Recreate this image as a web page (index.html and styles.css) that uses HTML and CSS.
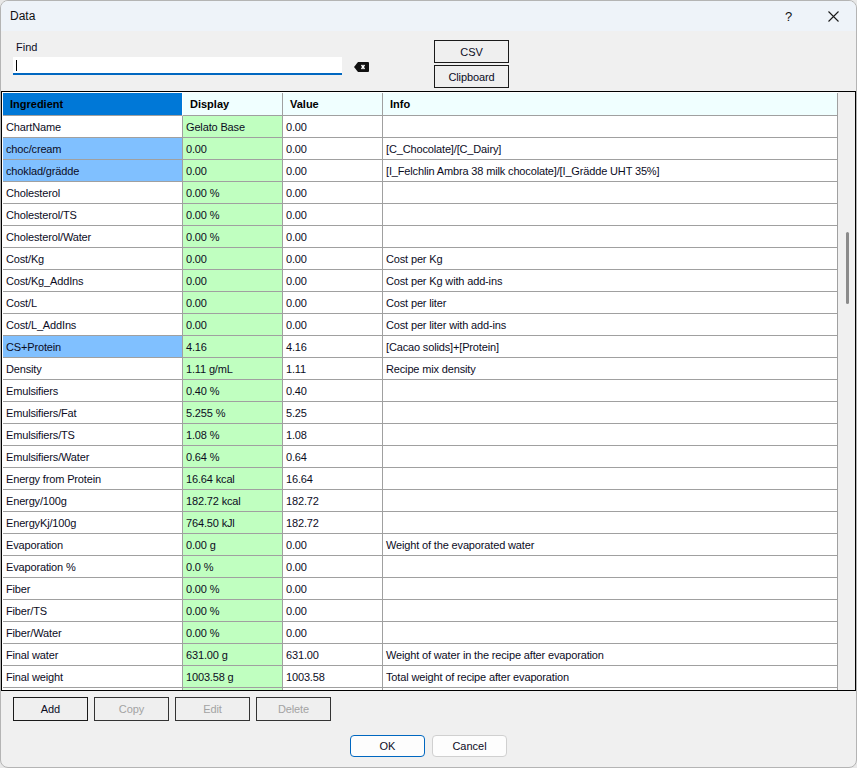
FILE: index.html
```html
<!DOCTYPE html>
<html lang="en">
<head>
    <meta charset="UTF-8">
    <title>Data</title>
    <link rel="stylesheet" href="styles.css">
</head>
<body>
    <div class="window">
        <div class="titlebar">
            <span class="title">Data</span>
            <span class="help">?</span>
            <span class="close">
                <svg width="11" height="11" viewBox="0 0 11 11"><path d="M0.5 0.5 L10.5 10.5 M10.5 0.5 L0.5 10.5" stroke="#1a1a1a" stroke-width="1.1" fill="none"/></svg>
            </span>
        </div>

        <div class="toolbar">
            <div class="find-group">
                <label class="find-label" for="find">Find</label>
                <div class="find-input" id="find"><span class="caret"></span></div>
            </div>
            <span class="clear-btn">
                <svg width="15" height="10" viewBox="0 0 15 10">
                    <path d="M4 0 H14 Q15 0 15 1 V9 Q15 10 14 10 H4 L0 5 Z" fill="#111"/>
                    <path d="M7.5 3 L10.5 7 M10.5 3 L7.5 7" stroke="#fff" stroke-width="1.4"/>
                </svg>
            </span>
            <div class="export-buttons">
                <button class="btn">CSV</button>
                <button class="btn">Clipboard</button>
            </div>
        </div>

        <div class="grid">
            <div class="grid-body">
                <div class="row header">
                    <div class="cell selected">Ingredient</div>
                    <div class="cell">Display</div>
                    <div class="cell">Value</div>
                    <div class="cell">Info</div>
                </div>
                <div class="row"><div class="cell">ChartName</div><div class="cell display">Gelato Base</div><div class="cell">0.00</div><div class="cell"></div></div>
                <div class="row"><div class="cell hl">choc/cream</div><div class="cell display">0.00</div><div class="cell">0.00</div><div class="cell">[C_Chocolate]/[C_Dairy]</div></div>
                <div class="row"><div class="cell hl">choklad/grädde</div><div class="cell display">0.00</div><div class="cell">0.00</div><div class="cell">[I_Felchlin Ambra 38 milk chocolate]/[I_Grädde UHT 35%]</div></div>
                <div class="row"><div class="cell">Cholesterol</div><div class="cell display">0.00 %</div><div class="cell">0.00</div><div class="cell"></div></div>
                <div class="row"><div class="cell">Cholesterol/TS</div><div class="cell display">0.00 %</div><div class="cell">0.00</div><div class="cell"></div></div>
                <div class="row"><div class="cell">Cholesterol/Water</div><div class="cell display">0.00 %</div><div class="cell">0.00</div><div class="cell"></div></div>
                <div class="row"><div class="cell">Cost/Kg</div><div class="cell display">0.00</div><div class="cell">0.00</div><div class="cell">Cost per Kg</div></div>
                <div class="row"><div class="cell">Cost/Kg_AddIns</div><div class="cell display">0.00</div><div class="cell">0.00</div><div class="cell">Cost per Kg with add-ins</div></div>
                <div class="row"><div class="cell">Cost/L</div><div class="cell display">0.00</div><div class="cell">0.00</div><div class="cell">Cost per liter</div></div>
                <div class="row"><div class="cell">Cost/L_AddIns</div><div class="cell display">0.00</div><div class="cell">0.00</div><div class="cell">Cost per liter with add-ins</div></div>
                <div class="row"><div class="cell hl">CS+Protein</div><div class="cell display">4.16</div><div class="cell">4.16</div><div class="cell">[Cacao solids]+[Protein]</div></div>
                <div class="row"><div class="cell">Density</div><div class="cell display">1.11 g/mL</div><div class="cell">1.11</div><div class="cell">Recipe mix density</div></div>
                <div class="row"><div class="cell">Emulsifiers</div><div class="cell display">0.40 %</div><div class="cell">0.40</div><div class="cell"></div></div>
                <div class="row"><div class="cell">Emulsifiers/Fat</div><div class="cell display">5.255 %</div><div class="cell">5.25</div><div class="cell"></div></div>
                <div class="row"><div class="cell">Emulsifiers/TS</div><div class="cell display">1.08 %</div><div class="cell">1.08</div><div class="cell"></div></div>
                <div class="row"><div class="cell">Emulsifiers/Water</div><div class="cell display">0.64 %</div><div class="cell">0.64</div><div class="cell"></div></div>
                <div class="row"><div class="cell">Energy from Protein</div><div class="cell display">16.64 kcal</div><div class="cell">16.64</div><div class="cell"></div></div>
                <div class="row"><div class="cell">Energy/100g</div><div class="cell display">182.72 kcal</div><div class="cell">182.72</div><div class="cell"></div></div>
                <div class="row"><div class="cell">EnergyKj/100g</div><div class="cell display">764.50 kJl</div><div class="cell">182.72</div><div class="cell"></div></div>
                <div class="row"><div class="cell">Evaporation</div><div class="cell display">0.00 g</div><div class="cell">0.00</div><div class="cell">Weight of the evaporated water</div></div>
                <div class="row"><div class="cell">Evaporation %</div><div class="cell display">0.0 %</div><div class="cell">0.00</div><div class="cell"></div></div>
                <div class="row"><div class="cell">Fiber</div><div class="cell display">0.00 %</div><div class="cell">0.00</div><div class="cell"></div></div>
                <div class="row"><div class="cell">Fiber/TS</div><div class="cell display">0.00 %</div><div class="cell">0.00</div><div class="cell"></div></div>
                <div class="row"><div class="cell">Fiber/Water</div><div class="cell display">0.00 %</div><div class="cell">0.00</div><div class="cell"></div></div>
                <div class="row"><div class="cell">Final water</div><div class="cell display">631.00 g</div><div class="cell">631.00</div><div class="cell">Weight of water in the recipe after evaporation</div></div>
                <div class="row"><div class="cell">Final weight</div><div class="cell display">1003.58 g</div><div class="cell">1003.58</div><div class="cell">Total weight of recipe after evaporation</div></div>
                <div class="row"><div class="cell"></div><div class="cell display"></div><div class="cell"></div><div class="cell"></div></div>
            </div>
            <div class="scrollbar"><div class="thumb"></div></div>
        </div>

        <div class="edit-buttons">
            <button class="btn">Add</button>
            <button class="btn" disabled>Copy</button>
            <button class="btn" disabled>Edit</button>
            <button class="btn" disabled>Delete</button>
        </div>

        <div class="dialog-buttons">
            <button class="dlg-btn default">OK</button>
            <button class="dlg-btn">Cancel</button>
        </div>
    </div>
</body>
</html>
```

FILE: styles.css
```css
body {
    margin: 0;
    font-family: 'Liberation Sans', Arial, sans-serif;
    font-size: 11px;
    color: #0c0c1e;
    background: #e8e8e8;
}

.window {
    width: 857px;
    height: 768px;
    box-sizing: border-box;
    border: 1px solid #b4b4b4;
    border-radius: 8px;
    background: #f0f0f0;
    overflow: hidden;
    display: flex;
    flex-direction: column;
}

.titlebar {
    height: 30px;
    flex-shrink: 0;
    background: #eef3f9;
    display: flex;
    align-items: center;
    padding-left: 9px;
    font-size: 12px;
    color: #111;
}

.title {
    flex: 1;
}

.help {
    width: 10px;
    margin-right: 33px;
    font-size: 13px;
}

.close {
    display: flex;
    margin-right: 17px;
}

.toolbar {
    height: 60px;
    flex-shrink: 0;
    display: flex;
    align-items: flex-start;
}

.find-group {
    margin-left: 12px;
    padding-top: 10px;
    width: 329px;
}

.find-label {
    display: block;
    padding-left: 3px;
    line-height: 13px;
    margin-bottom: 3px;
}

.find-input {
    height: 16px;
    background: #fff;
    border-bottom: 2px solid #0067c0;
    display: flex;
    align-items: center;
}

.caret {
    width: 1px;
    height: 11px;
    margin-left: 3px;
    background: #000;
}

.clear-btn {
    display: flex;
    margin-left: 12px;
    margin-top: 31px;
}

.export-buttons {
    display: flex;
    flex-direction: column;
    gap: 2px;
    margin-left: 65px;
    margin-top: 9px;
}

.btn {
    width: 75px;
    height: 23px;
    padding: 0;
    border: 1px solid #1a1a1a;
    background: #efefef;
    font-family: inherit;
    font-size: 11px;
    letter-spacing: -0.1px;
    color: #0c0c1e;
}

.btn:disabled {
    color: #a3a3a3;
    border-color: #333;
}

.grid {
    height: 600px;
    flex-shrink: 0;
    box-sizing: border-box;
    border: 1px solid #000;
    background: #fff;
    display: flex;
    overflow: hidden;
}

.grid-body {
    width: 836px;
    padding: 1px 0 0 1px;
    overflow: hidden;
}

.row {
    display: grid;
    grid-template-columns: 180px 100px 100px 455px;
    height: 22px;
}

.cell {
    box-sizing: border-box;
    border-right: 1px solid #a0a0a0;
    border-bottom: 1px solid #a0a0a0;
    padding-left: 3px;
    line-height: 22px;
    letter-spacing: -0.15px;
    white-space: nowrap;
    overflow: hidden;
}

.header {
    height: 23px;
}

.header .cell {
    background: #f0ffff;
    font-weight: bold;
    padding-left: 7px;
    line-height: 22px;
    letter-spacing: 0;
    color: #000;
}

.header .cell.selected {
    background: #0078d7;
    border-right-color: #fff;
}

.cell.display {
    background: #c0ffc0;
}

.cell.hl {
    background: #80c0ff;
}

.scrollbar {
    width: 17px;
    flex-shrink: 0;
    background: #f0f0f0;
    position: relative;
}

.thumb {
    position: absolute;
    left: 8px;
    top: 140px;
    width: 3px;
    height: 72px;
    border-radius: 2px;
    background: #8b8b8b;
}

.edit-buttons {
    display: flex;
    gap: 6px;
    padding-left: 12px;
    margin-top: 6px;
}

.edit-buttons .btn {
    height: 24px;
}

.dialog-buttons {
    display: flex;
    justify-content: center;
    gap: 7px;
    margin-top: 14px;
}

.dlg-btn {
    width: 75px;
    height: 22px;
    padding: 0;
    border: 1px solid #d0d0d0;
    border-radius: 4px;
    background: #fdfdfd;
    font-family: inherit;
    font-size: 11px;
    color: #0c0c1e;
}

.dlg-btn.default {
    border-color: #0067c0;
}
```
